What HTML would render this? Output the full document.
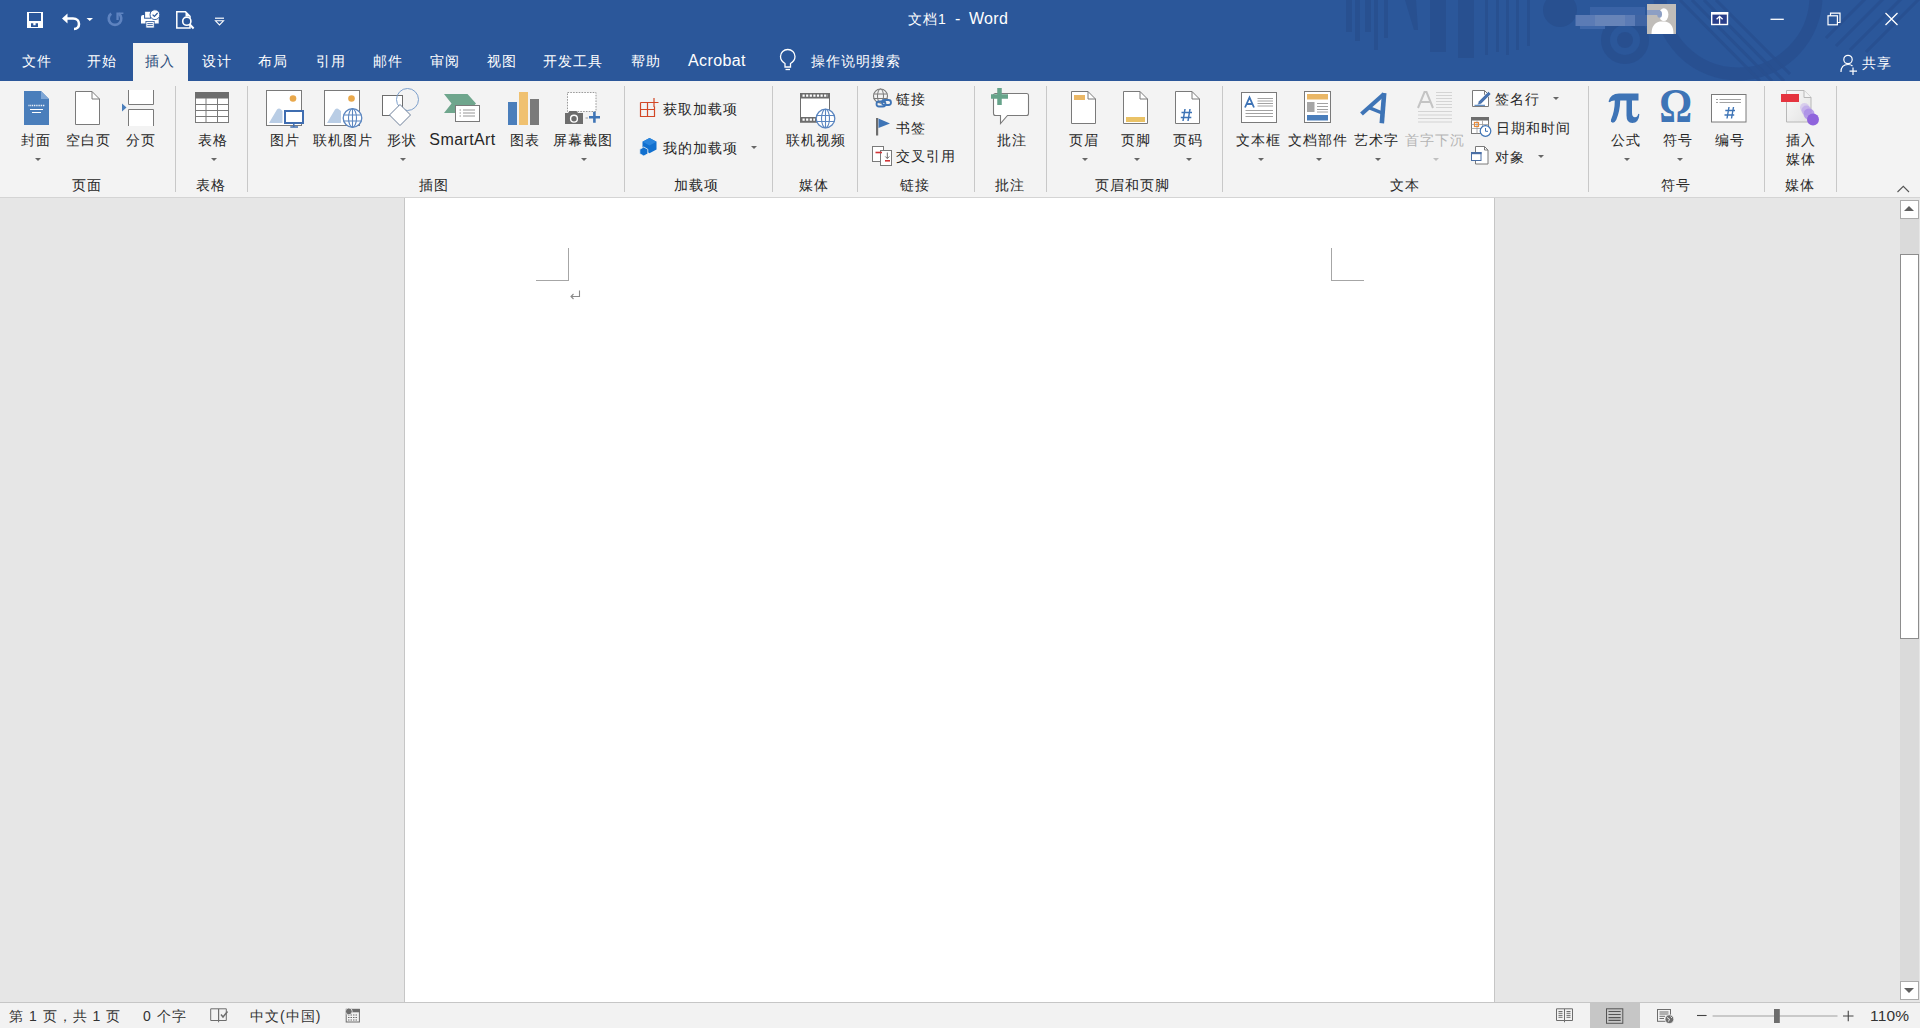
<!DOCTYPE html>
<html><head><meta charset="utf-8"><title>Word</title>
<style>
html,body{margin:0;padding:0;width:1920px;height:1028px;overflow:hidden;background:#e6e6e6;font-family:"Liberation Sans",sans-serif;}
.a{position:absolute;}
.t{position:absolute;white-space:nowrap;font-size:14px;letter-spacing:1px;line-height:20px;color:#262626;font-weight:500;}
.c{width:200px;text-align:center;padding-left:0.5px;}
.w{color:#fff;}
.sep{position:absolute;top:86px;width:1px;height:106px;background:#c8c8c8;}
.dd{position:absolute;width:0;height:0;border-left:3px solid transparent;border-right:3px solid transparent;border-top:3px solid #666;}
svg{position:absolute;overflow:visible;}
</style></head><body>
<!-- TITLE BAR + TABS -->
<div class="a" id="blue" style="left:0;top:0;width:1920px;height:81px;background:#2b579a;"></div>
<!-- decorations -->
<svg id="deco" style="left:0;top:0" width="1920" height="81" viewBox="0 0 1920 81">
<defs><clipPath id="tb"><rect x="0" y="0" width="1920" height="81"/></clipPath></defs>
<g clip-path="url(#tb)" fill="#284f8f" opacity="0.85">
<rect x="1346" y="0" width="6" height="32"/>
<rect x="1355" y="0" width="5" height="41"/>
<rect x="1365" y="0" width="6" height="32"/>
<rect x="1374" y="0" width="4" height="50"/>
<rect x="1384" y="0" width="4" height="38"/>
<path d="M1405 0H1416L1418 30H1414Z"/>
<rect x="1430" y="0" width="16" height="52"/>
<rect x="1458" y="0" width="16" height="58"/>
<rect x="1485" y="0" width="3" height="55"/>
<rect x="1496" y="0" width="3" height="52"/>
<rect x="1506" y="0" width="3" height="55"/>
<rect x="1516" y="0" width="3" height="50"/>
<rect x="1527" y="0" width="3" height="46"/>
<circle cx="1560" cy="10" r="17"/>
<circle cx="1625" cy="40" r="24"/>
</g>
<g clip-path="url(#tb)">
<circle cx="1625" cy="40" r="15" fill="#2b579a"/>
<circle cx="1625" cy="40" r="8" fill="#284f8f"/>
<circle cx="1738" cy="-4" r="78" fill="none" stroke="#284f8f" stroke-width="13" opacity="0.85"/>
<g stroke="#284f8f" stroke-width="3" opacity="0.8">
<path d="M1680 0L1760 81M1692 0L1772 81M1704 0L1784 81M1716 0L1790 74"/>
<path d="M1826 38L1874 -10M1836 46L1892 -10M1850 50L1910 -10M1866 52L1920 -2"/>
</g>
</g>
<!-- blurred name -->
<rect x="1590" y="7" width="55" height="8" fill="#3a63a6"/>
<rect x="1575.5" y="15" width="60" height="11" fill="#5b7bb5"/>
<rect x="1595" y="15" width="30" height="11" fill="#6784b8"/>
<rect x="1635" y="15" width="12" height="11" fill="#3f64a3"/>
<rect x="1580" y="26" width="25" height="3" fill="#3f68aa"/>
<!-- avatar -->
<rect x="1647" y="4" width="29" height="30" fill="#c0bdb9"/>
<rect x="1647" y="10" width="13" height="5" fill="#8d9fc4"/>
<path d="M1651.5 34C1651.5 26 1655 22.5 1660 21.5L1665 21.5C1670.5 22.5 1673.5 26 1673.5 34Z" fill="#fff"/>
<ellipse cx="1663.8" cy="14.6" rx="4.6" ry="6.4" fill="#fff"/><ellipse cx="1659.6" cy="14.2" rx="2.4" ry="3.6" fill="#8d9fc4"/>
<!-- QAT -->
<g fill="#fff">
<path d="M27 12H43V28H27ZM29 13V21H41V13ZM31 23.3V27H38V23.3ZM33.3 23.3V25.3H35.6V23.3Z" fill-rule="evenodd"/>
</g>
<path d="M64 18.5H73C77 18.5 79 21 79 24C79 27 77 29 74 29" fill="none" stroke="#fff" stroke-width="2.6"/>
<path d="M62 18.5L67.5 13.5V23.5Z" fill="#fff"/>
<path d="M86.5 18H93L89.75 21Z" fill="#fff"/>
<path d="M118.8 13.6A6.3 6.3 0 1 1 111.2 13.6" fill="none" stroke="#5e83c0" stroke-width="2.6"/>
<path d="M116.4 12.6H123.4V14H118.7V20H116.4Z" fill="#5e83c0"/>
<path d="M143 15H158.7V23.5H141V17Q141 15 143 15Z" fill="#fff"/>
<rect x="144.6" y="11.2" width="6" height="7" fill="#fff" stroke="#2b579a" stroke-width="1"/>
<circle cx="154.9" cy="14.7" r="4.9" fill="#fff" stroke="#2b579a" stroke-width="0.9"/>
<path d="M152.6 14.7L154.4 16.5L157.6 13" fill="none" stroke="#2b579a" stroke-width="1.2"/>
<rect x="145.9" y="21.5" width="8.3" height="6.5" fill="#fff" stroke="#2b579a" stroke-width="0.8"/>
<path d="M147.3 23.6H152.8M147.3 25.6H152.8" stroke="#2b579a" stroke-width="0.9"/>
<path d="M176.8 11.8H185.5L190 16.3V28H176.8Z" fill="none" stroke="#fff" stroke-width="1.5"/>
<path d="M185.5 11.8V16.3H190" fill="#fff"/>
<circle cx="186.8" cy="21.2" r="4.1" fill="#2b579a" stroke="#fff" stroke-width="1.6"/>
<path d="M189.6 24.2L193.6 28.5" stroke="#fff" stroke-width="2"/>
<path d="M215 18.2H224" stroke="#fff" stroke-width="1.2"/>
<path d="M215.5 20.8H223.5L219.5 25Z" fill="none" stroke="#fff" stroke-width="1.1"/>
<!-- window controls -->
<rect x="1711.7" y="12.7" width="15.8" height="11.8" fill="#2a3f8a" stroke="#fff" stroke-width="1.4"/>
<rect x="1711" y="12" width="17.2" height="2.6" fill="#fff"/>
<path d="M1719.6 24V16.5M1716.6 19.3L1719.6 16.3L1722.6 19.3" fill="none" stroke="#fff" stroke-width="1.3"/>
<path d="M1770.5 19.3H1783.8" stroke="#fff" stroke-width="1.3"/>
<rect x="1828" y="15.8" width="9.4" height="9" fill="none" stroke="#fff" stroke-width="1.2"/>
<path d="M1830.5 15.8V13.2H1840V22.5H1837.4" fill="none" stroke="#fff" stroke-width="1.2"/>
<path d="M1885.5 13L1897.5 25M1897.5 13L1885.5 25" stroke="#fff" stroke-width="1.3"/>
<!-- lightbulb -->
<path d="M785 67V63.5C782.5 62 780.5 59.5 780.5 56.5C780.5 52.5 783.8 49.5 787.8 49.5C791.8 49.5 795 52.5 795 56.5C795 59.5 793 62 790.5 63.5V67Z" fill="none" stroke="#fff" stroke-width="1.3"/>
<path d="M785.5 69.5H790" stroke="#fff" stroke-width="1.3"/>
<!-- share -->
<circle cx="1848" cy="59.5" r="4.2" fill="none" stroke="#fff" stroke-width="1.2"/>
<path d="M1841 72C1841 67 1844 64.5 1848 64.5C1850 64.5 1851.5 65 1852.5 66" fill="none" stroke="#fff" stroke-width="1.2"/>
<path d="M1853 67.5V75M1849.5 71.2H1857" stroke="#fff" stroke-width="1.2"/>
</svg>
<div id="qat"></div>
<div class="t w" style="left:908px;top:9px;">文档1</div>
<div class="t w" style="left:955px;top:9px;font-size:16px;">-</div>
<div class="t w" style="left:969px;top:9px;font-size:16px;letter-spacing:0.3px">Word</div>
<div id="winctl"></div>

<!-- tabs -->
<div class="a" style="left:133px;top:43px;width:55px;height:38px;background:#f3f3f3;"></div>
<div class="t w" style="left:22px;top:51px;">文件</div>
<div class="t w" style="left:87px;top:51px;">开始</div>
<div class="t" style="left:145px;top:51px;color:#2b4b7a">插入</div>
<div class="t w" style="left:202px;top:51px;">设计</div>
<div class="t w" style="left:258px;top:51px;">布局</div>
<div class="t w" style="left:316px;top:51px;">引用</div>
<div class="t w" style="left:373px;top:51px;">邮件</div>
<div class="t w" style="left:430px;top:51px;">审阅</div>
<div class="t w" style="left:487px;top:51px;">视图</div>
<div class="t w" style="left:543px;top:51px;">开发工具</div>
<div class="t w" style="left:631px;top:51px;">帮助</div>
<div class="t w" style="left:688px;top:51px;font-size:16px;letter-spacing:0.4px">Acrobat</div>
<div class="t w" style="left:811px;top:51px;">操作说明搜索</div>
<div class="t w" style="left:1862px;top:53px;">共享</div>

<!-- RIBBON -->
<div class="a" id="ribbon" style="left:0;top:81px;width:1920px;height:116px;background:#f3f3f3;"></div>
<div class="a" style="left:0;top:197px;width:1920px;height:1px;background:#d4d4d4;"></div>
<div id="seps">
<div class="sep" style="left:175px"></div>
<div class="sep" style="left:247px"></div>
<div class="sep" style="left:624px"></div>
<div class="sep" style="left:772px"></div>
<div class="sep" style="left:857px"></div>
<div class="sep" style="left:974px"></div>
<div class="sep" style="left:1046px"></div>
<div class="sep" style="left:1222px"></div>
<div class="sep" style="left:1588px"></div>
<div class="sep" style="left:1764px"></div>
<div class="sep" style="left:1836px"></div>
</div>
<div id="labels">
<!-- big button labels -->
<div class="t c" style="left:-65px;top:130px">封面</div>
<div class="t c" style="left:-12px;top:130px">空白页</div>
<div class="t c" style="left:40px;top:130px">分页</div>
<div class="t c" style="left:112px;top:130px">表格</div>
<div class="t c" style="left:184px;top:130px">图片</div>
<div class="t c" style="left:242px;top:130px">联机图片</div>
<div class="t c" style="left:301px;top:130px">形状</div>
<div class="t c" style="left:362px;top:130px;font-size:16px;letter-spacing:0.4px">SmartArt</div>
<div class="t c" style="left:424px;top:130px">图表</div>
<div class="t c" style="left:482px;top:130px">屏幕截图</div>
<div class="t" style="left:663px;top:99px">获取加载项</div>
<div class="t" style="left:663px;top:138px">我的加载项</div>
<div class="t c" style="left:715px;top:130px">联机视频</div>
<div class="t" style="left:896px;top:89px">链接</div>
<div class="t" style="left:896px;top:118px">书签</div>
<div class="t" style="left:896px;top:146px">交叉引用</div>
<div class="t c" style="left:911px;top:130px">批注</div>
<div class="t c" style="left:983px;top:130px">页眉</div>
<div class="t c" style="left:1035px;top:130px">页脚</div>
<div class="t c" style="left:1087px;top:130px">页码</div>
<div class="t c" style="left:1158px;top:130px">文本框</div>
<div class="t c" style="left:1217px;top:130px">文档部件</div>
<div class="t c" style="left:1276px;top:130px">艺术字</div>
<div class="t c" style="left:1334px;top:130px;color:#b4b4b4">首字下沉</div>
<div class="t" style="left:1495px;top:89px">签名行</div>
<div class="t" style="left:1496px;top:118px">日期和时间</div>
<div class="t" style="left:1495px;top:147px">对象</div>
<div class="t c" style="left:1525px;top:130px">公式</div>
<div class="t c" style="left:1577px;top:130px">符号</div>
<div class="t c" style="left:1629px;top:130px">编号</div>
<div class="t c" style="left:1700px;top:130px">插入</div>
<div class="t c" style="left:1700px;top:149px">媒体</div>
<!-- group labels -->
<div class="t c" style="left:-14px;top:175px">页面</div>
<div class="t c" style="left:110px;top:175px">表格</div>
<div class="t c" style="left:333px;top:175px">插图</div>
<div class="t c" style="left:596px;top:175px">加载项</div>
<div class="t c" style="left:713px;top:175px">媒体</div>
<div class="t c" style="left:814px;top:175px">链接</div>
<div class="t c" style="left:909px;top:175px">批注</div>
<div class="t c" style="left:1032px;top:175px">页眉和页脚</div>
<div class="t c" style="left:1304px;top:175px">文本</div>
<div class="t c" style="left:1575px;top:175px">符号</div>
<div class="t c" style="left:1699px;top:175px">媒体</div>
</div>
<div id="dds">
<div class="dd" style="left:35px;top:158px"></div>
<div class="dd" style="left:211px;top:158px"></div>
<div class="dd" style="left:400px;top:158px"></div>
<div class="dd" style="left:581px;top:158px"></div>
<div class="dd" style="left:751px;top:146px"></div>
<div class="dd" style="left:1082px;top:158px"></div>
<div class="dd" style="left:1134px;top:158px"></div>
<div class="dd" style="left:1186px;top:158px"></div>
<div class="dd" style="left:1258px;top:158px"></div>
<div class="dd" style="left:1316px;top:158px"></div>
<div class="dd" style="left:1375px;top:158px"></div>
<div class="dd" style="left:1433px;top:158px;border-top-color:#c0c0c0"></div>
<div class="dd" style="left:1553px;top:97px"></div>
<div class="dd" style="left:1538px;top:155px"></div>
<div class="dd" style="left:1624px;top:158px"></div>
<div class="dd" style="left:1677px;top:158px"></div>
</div>
<svg id="ricons" style="left:0;top:0" width="1920" height="200" viewBox="0 0 1920 200">
<!-- cover page -->
<path d="M24 91H41L49 99V125H24Z" fill="#4a7ebb"/>
<path d="M41 91V99H49Z" fill="#7ea6d6"/>
<path d="M28.5 105.5H45" stroke="#fff" stroke-width="1.6" stroke-dasharray="1 0.8"/>
<path d="M30 109.5H43M32 112.5H41" stroke="#fff" stroke-width="1"/>
<!-- blank page -->
<path d="M75.5 91.5H92L99.5 99V124.5H75.5Z" fill="#fff" stroke="#7a7a7a" stroke-width="1"/>
<path d="M92 91.5V99H99.5" fill="none" stroke="#7a7a7a" stroke-width="1"/>
<!-- page break -->
<path d="M128.5 90V104.5H153.5V90M128.5 126V109.5H153.5V126" fill="#fff" stroke="#7a7a7a" stroke-width="1"/>
<path d="M122 103.5L126.5 107.5L122 111.5Z" fill="#4a7ebb"/>
<!-- table -->
<rect x="195.5" y="92.5" width="33" height="30" fill="#fff" stroke="#7a7a7a"/>
<rect x="195" y="92" width="34" height="6.5" fill="#6d6d6d"/>
<path d="M206 98V122M217.5 98V122M195.5 104.5H228.5M195.5 110.5H228.5M195.5 116.5H228.5" stroke="#7a7a7a" stroke-width="1"/>
<!-- picture -->
<rect x="266.5" y="90.5" width="35" height="35" fill="#fff" stroke="#7a7a7a"/>
<circle cx="293" cy="98.5" r="3.3" fill="#e9a84b"/>
<path d="M269 123L277 109.5Q279 107.3 281 109.5L282.5 111V123Z" fill="#b9cde5"/>
<rect x="285" y="111" width="18" height="12" fill="#fff" stroke="#3f6db0" stroke-width="2"/>
<path d="M293.8 124V126.5M290.3 127H298" stroke="#3f6db0" stroke-width="1.5"/>
<!-- online picture -->
<rect x="324.5" y="90.5" width="35" height="35" fill="#fff" stroke="#7a7a7a"/>
<circle cx="351.5" cy="98.5" r="3.3" fill="#e9a84b"/>
<path d="M327 123L335 109.5Q337 107.3 339 109.5L341 111V123Z" fill="#b9cde5"/>
<circle cx="352.5" cy="118" r="9.3" fill="#fff" stroke="#5b86c0" stroke-width="1.3"/>
<ellipse cx="352.5" cy="118" rx="4" ry="9.3" fill="none" stroke="#5b86c0" stroke-width="1.1"/>
<path d="M352.5 108.7V127.3M343.5 115H361.5M343.5 121H361.5" stroke="#5b86c0" stroke-width="1.1"/>
<!-- shapes -->
<rect x="382.5" y="95.5" width="20" height="20" fill="#fff" stroke="#6d6d6d"/>
<circle cx="407.5" cy="99.5" r="11" fill="none" stroke="#7da0cc" stroke-width="1"/>
<path d="M400 104.5L410.5 115L400 125.5L389.5 115Z" fill="#fff" stroke="#6d7f99" stroke-width="1"/>
<!-- smartart -->
<path d="M444 94H467.5L476 103.5L467.5 113H444L451.5 103.5Z" fill="#6fa68d"/>
<rect x="455.5" y="105.5" width="24" height="16" fill="#fff" stroke="#7a7a7a"/>
<path d="M459.5 110H461M459.5 113H461M459.5 116H461M463 110H475M463 113H475M463 116H475" stroke="#8a8a8a" stroke-width="0.9"/>
<!-- chart -->
<rect x="508" y="102" width="9" height="23" fill="#4a7ebb"/>
<rect x="519" y="92" width="9" height="33" fill="#f0c170"/>
<rect x="530" y="99" width="9" height="26" fill="#7a7a7a"/>
<!-- screenshot -->
<rect x="567.5" y="92.5" width="28.5" height="19" fill="#fff" stroke="#9a9a9a" stroke-dasharray="1.6 1.2"/>
<path d="M565 113H568L569.5 111H576.5L578 113H583V124H565Z" fill="#6d6d6d"/>
<circle cx="574" cy="118.7" r="3.4" fill="none" stroke="#fff" stroke-width="1.4"/>
<path d="M594.4 111.8V122.8M589 117.3H600" stroke="#3e74b6" stroke-width="2.6"/>
<path d="M585.5 118H588" stroke="#9a9a9a" stroke-width="1"/>
<!-- get add-ins -->
<path d="M640.5 102.5H650.5M640.5 102.5V116.5H654.5V106.5M640.5 109.5H654.5M647.5 102.5V116.5" fill="none" stroke="#d24726" stroke-width="1.2"/>
<path d="M654 98V107M649.5 102.5H658.5" stroke="#d24726" stroke-width="1.2"/>
<!-- my add-ins -->
<path d="M649.5 138L656.5 141.8V149.5L649.5 153.3L642.5 149.5V141.8Z" fill="#1170cf"/>
<path d="M649.5 138L656.5 141.8L649.5 145.6L642.5 141.8Z" fill="#2a85dd"/>
<path d="M643.8 147L647.8 149.3V153.8L643.8 156L639.8 153.8V149.3Z" fill="#1170cf" stroke="#f3f3f3" stroke-width="0.8"/>
<!-- online video -->
<rect x="800.5" y="93.5" width="29" height="28.5" fill="#fff" stroke="#6d6d6d"/>
<rect x="800" y="93" width="30" height="5.5" fill="#6d6d6d"/>
<rect x="800" y="117" width="30" height="5.5" fill="#6d6d6d"/>
<path d="M802.5 95.7H828M802.5 119.7H815" stroke="#fff" stroke-width="2.2" stroke-dasharray="2.2 1.4"/>
<circle cx="825.5" cy="118.5" r="9.3" fill="#fff" stroke="#5b86c0" stroke-width="1.3"/>
<ellipse cx="825.5" cy="118.5" rx="4" ry="9.3" fill="none" stroke="#5b86c0" stroke-width="1.1"/>
<path d="M825.5 109.2V127.8M816.5 115.5H834.5M816.5 121.5H834.5" stroke="#5b86c0" stroke-width="1.1"/>
<!-- link -->
<circle cx="880.5" cy="96" r="7" fill="#f3f3f3" stroke="#7a7a7a" stroke-width="1.1"/>
<ellipse cx="880.5" cy="96" rx="3" ry="7" fill="none" stroke="#7a7a7a" stroke-width="1"/>
<path d="M873.5 94H887.5M873.5 98.5H887.5" stroke="#7a7a7a" stroke-width="1"/>
<rect x="876.5" y="101.5" width="9" height="5" rx="2.5" fill="none" stroke="#3e74b6" stroke-width="1.8"/>
<rect x="882" y="100" width="9" height="5" rx="2.5" fill="none" stroke="#3e74b6" stroke-width="1.8"/>
<!-- bookmark -->
<rect x="876" y="118" width="2.2" height="17.5" fill="#6d6d6d"/>
<path d="M878.5 118.5L890 123.5L878.5 128Z" fill="#3e74b6"/>
<!-- cross reference -->
<rect x="872.5" y="146.5" width="11" height="15" fill="#fff" stroke="#7a7a7a"/>
<rect x="880.5" y="150.5" width="11" height="15" fill="#fff" stroke="#7a7a7a"/>
<path d="M875.5 152.5H882" stroke="#d13438" stroke-width="1.6"/>
<path d="M885 160.8H890" stroke="#d13438" stroke-width="1.6"/>
<path d="M887.3 152.5V158.5M885.3 156.5L887.3 158.5L889.3 156.5" fill="none" stroke="#6d6d6d" stroke-width="1"/>
<!-- comment -->
<path d="M995.5 93.5H1026.5Q1028.5 93.5 1028.5 95.5V113.5Q1028.5 115.5 1026.5 115.5H1007.5L1000.5 123.5V115.5H995.5Q993.5 115.5 993.5 113.5V95.5Q993.5 93.5 995.5 93.5Z" fill="#fff" stroke="#7a7a7a" stroke-width="1.1"/>
<path d="M999.5 88V105M991 96.5H1008" stroke="#66a38a" stroke-width="4.5"/>
<!-- header / footer / page number -->
<path d="M1071.5 91.5H1088L1095.5 99V123.5H1071.5Z" fill="#fff" stroke="#7a7a7a"/>
<path d="M1088 91.5V99H1095.5" fill="none" stroke="#7a7a7a"/>
<rect x="1074" y="95" width="11" height="5" fill="#eab766"/>
<path d="M1123.5 91.5H1140L1147.5 99V123.5H1123.5Z" fill="#fff" stroke="#7a7a7a"/>
<path d="M1140 91.5V99H1147.5" fill="none" stroke="#7a7a7a"/>
<rect x="1126" y="117" width="19" height="5" fill="#eac266"/>
<path d="M1175.5 91.5H1192L1199.5 99V123.5H1175.5Z" fill="#fff" stroke="#7a7a7a"/>
<path d="M1192 91.5V99H1199.5" fill="none" stroke="#7a7a7a"/>
<path d="M1185 109L1183 121M1190 109L1188 121M1181.5 112.5H1192M1180.8 117.5H1191.3" stroke="#3e74b6" stroke-width="1.5"/>
<!-- textbox -->
<rect x="1241.5" y="92.5" width="35" height="30" fill="#fff" stroke="#7a7a7a"/>
<path d="M1245 107.5L1249.5 97.5L1254 107.5M1246.5 104H1252.5" fill="none" stroke="#3e74b6" stroke-width="1.8"/>
<path d="M1257.5 98.5H1273M1257.5 101H1273M1257.5 103.5H1273M1257.5 106H1273M1245.5 110.5H1273M1245.5 113.5H1273M1245.5 116.5H1273" stroke="#8a8a8a" stroke-width="0.8"/>
<!-- quick parts -->
<rect x="1304.5" y="91.5" width="26" height="31" fill="#fff" stroke="#7a7a7a"/>
<rect x="1307" y="94" width="21" height="5.5" fill="#eab766"/>
<rect x="1307" y="102" width="7.5" height="10" fill="#a6a6a6"/>
<path d="M1317 103.5H1328M1317 106.5H1328M1317 109.5H1328M1317 112H1328" stroke="#8a8a8a" stroke-width="0.8"/>
<rect x="1307" y="115" width="21" height="5.5" fill="#4a7ebb"/>
<!-- wordart -->
<path d="M1361.5 114L1384 94" stroke="#3e74b6" stroke-width="4.2"/>
<path d="M1384.2 93L1381.8 123.2" stroke="#3e74b6" stroke-width="4.6"/>
<path d="M1369 107.6L1381.5 112.8" stroke="#3e74b6" stroke-width="3.4"/>
<!-- drop cap disabled -->
<path d="M1418 108L1424.5 92H1426.5L1433 108M1420.5 102H1430.5" fill="none" stroke="#c4c4c4" stroke-width="2"/>
<path d="M1436 92.5H1452M1436 95.5H1452M1436 98.5H1452M1436 101.5H1452M1436 104.5H1452M1436 107.5H1452M1418 111.5H1452M1418 115H1452M1418 118.5H1452M1418 122H1452" stroke="#d0d0d0" stroke-width="0.9"/>
<!-- signature line -->
<path d="M1472.5 90.5H1484.5L1488.5 94.5V106.5H1472.5Z" fill="#fff" stroke="#7a7a7a"/>
<path d="M1484.5 90.5V94.5H1488.5" fill="none" stroke="#7a7a7a"/>
<path d="M1478.5 101.5L1488.5 91.5L1491 94L1481 104L1477.5 105Z" fill="#4a74b0" stroke="#f3f3f3" stroke-width="0.6"/>
<path d="M1474.5 105.3H1485" stroke="#3e74b6" stroke-width="1"/>
<!-- date time -->
<rect x="1471.5" y="117.5" width="17" height="16" fill="#fff" stroke="#7a7a7a"/>
<rect x="1471" y="117" width="18" height="3.5" fill="#6d6d6d"/>
<path d="M1471.5 124.5H1488.5M1471.5 128.5H1482M1477 120.5V133.5M1482.5 120.5V128" stroke="#9a9a9a" stroke-width="0.8"/>
<rect x="1474.5" y="122.5" width="4" height="4" fill="none" stroke="#e98b3a" stroke-width="1.2"/>
<circle cx="1485.5" cy="131" r="5.3" fill="#fff" stroke="#3e74b6" stroke-width="1.2"/>
<path d="M1485.5 128V131.3H1488" fill="none" stroke="#3e74b6" stroke-width="1"/>
<!-- object -->
<path d="M1475.5 146.5H1484.5L1488 150V164H1475.5Z" fill="#fff" stroke="#7a7a7a"/>
<path d="M1484.5 146.5V150H1488" fill="none" stroke="#7a7a7a"/>
<rect x="1471.5" y="152.5" width="9.5" height="8" fill="#fff" stroke="#4a6fa5" stroke-width="1"/>
<rect x="1471" y="152" width="10.5" height="2.2" fill="#4a6fa5"/>
<!-- pi -->
<path d="M1608.5 101.5Q1610.5 93.5 1619 93.5H1638.5V100.5H1632V112.5Q1632 117.3 1635 117.3Q1637.5 117.3 1638.3 113.8L1639.4 114.3Q1638.8 123 1632.3 123Q1626.5 123 1626.5 115.5V100.5H1620.2Q1620 111 1616.3 119.8Q1614.8 123 1612.3 122.6Q1610.3 122.2 1611 119.8Q1614.8 111 1614.8 100.5Q1611.5 100.3 1609.6 102.3Z" fill="#3e74b6"/>
<!-- omega -->
<text transform="translate(1675.6 122) scale(1 1.2)" x="0" y="0" text-anchor="middle" font-family="Liberation Serif" font-weight="bold" font-size="41" fill="#3e74b6">Ω</text>
<!-- numbering -->
<rect x="1711.5" y="94.5" width="34.5" height="27.5" fill="#fff" stroke="#7a7a7a"/>
<path d="M1716 99.5H1718M1719.5 99.5H1741M1716 102.5H1718M1719.5 102.5H1741" stroke="#8a8a8a" stroke-width="0.8"/>
<path d="M1729 107L1727 118.5M1733.5 107L1731.5 118.5M1725.3 110.5H1735M1724.5 115H1734.2" stroke="#3e74b6" stroke-width="1.4"/>
<!-- insert media -->
<defs><linearGradient id="pg" x1="0" y1="0" x2="1" y2="1"><stop offset="0" stop-color="#fafafa"/><stop offset="1" stop-color="#e2e2e2"/></linearGradient></defs>
<path d="M1786.5 90.5H1804L1811 97.5V122H1786.5Z" fill="url(#pg)" stroke="#b8b8b8"/>
<path d="M1804 90.5V97.5H1811" fill="#f4f4f4" stroke="#b8b8b8"/>
<rect x="1781" y="94" width="18" height="8" fill="#e5343f"/>
<circle cx="1804.5" cy="107.5" r="4.5" fill="#c9b8ec" opacity="0.6"/>
<circle cx="1806.5" cy="110.5" r="5" fill="#bba4ea" opacity="0.7"/>
<circle cx="1809" cy="114" r="5.5" fill="#a98be6" opacity="0.8"/>
<circle cx="1813" cy="119.5" r="6" fill="#8f64dc"/>
<!-- collapse -->
<path d="M1897.5 192L1903.3 186.3L1909 192" fill="none" stroke="#555" stroke-width="1.1"/>
</svg>

<!-- DOCUMENT -->
<div class="a" style="left:404px;top:198px;width:1089px;height:804px;background:#fff;border-left:1px solid #c6c6c6;border-right:1px solid #c6c6c6;"></div>
<div class="a" style="left:568px;top:248px;width:1px;height:33px;background:#a6a6a6"></div>
<div class="a" style="left:536px;top:280px;width:33px;height:1px;background:#a6a6a6"></div>
<div class="a" style="left:1331px;top:248px;width:1px;height:33px;background:#a6a6a6"></div>
<div class="a" style="left:1331px;top:280px;width:33px;height:1px;background:#a6a6a6"></div>
<svg style="left:569px;top:289px" width="12" height="12" viewBox="0 0 12 12"><path d="M10.5 1.5V7.5H2M4.5 5L2 7.5L4.5 10" fill="none" stroke="#8a8a8a" stroke-width="1.1"/></svg>

<!-- SCROLLBAR -->
<div class="a" style="left:1900px;top:219px;width:19px;height:762px;background:#dadada"></div>
<div class="a" style="left:1900px;top:200px;width:17px;height:17px;background:#fff;border:1px solid #ababab"></div>
<div class="a" style="left:1904px;top:206px;width:0;height:0;border-left:5px solid transparent;border-right:5px solid transparent;border-bottom:5px solid #606060"></div>
<div class="a" style="left:1900px;top:254px;width:17px;height:383px;background:#fff;border:1px solid #8d8d8d"></div>
<div class="a" style="left:1900px;top:981px;width:17px;height:17px;background:#fff;border:1px solid #ababab"></div>
<div class="a" style="left:1904px;top:988px;width:0;height:0;border-left:5px solid transparent;border-right:5px solid transparent;border-top:5px solid #606060"></div>

<!-- STATUS BAR -->
<div class="a" style="left:0;top:1002px;width:1920px;height:1px;background:#c6c6c6"></div>
<div class="a" style="left:0;top:1003px;width:1920px;height:25px;background:#f2f2f2"></div>
<div class="t" style="left:9px;top:1006px;color:#333">第 1 页，共 1 页</div>
<div class="t" style="left:143px;top:1006px;color:#333">0 个字</div>
<div class="t" style="left:250px;top:1006px;color:#333">中文(中国)</div>
<div class="a" style="left:1590px;top:1003px;width:50px;height:25px;background:#c6c6c6"></div>
<div class="t" style="left:1870px;top:1005.5px;color:#333;font-size:15.5px;letter-spacing:0.2px">110%</div>
<svg id="sicons" style="left:0;top:1003px" width="1920" height="25" viewBox="0 1003 1920 25">
<!-- proofing -->
<path d="M210.7 1008.8H218.6V1020.5H210.7Z M218.6 1008.8H226.3V1020.5H218.6Z" fill="none" stroke="#6d6d6d" stroke-width="1"/>
<path d="M218.6 1020.5V1022.3" stroke="#6d6d6d" stroke-width="1"/>
<path d="M221 1014.5L223 1017L227.5 1011.5" fill="none" stroke="#6d6d6d" stroke-width="1.5"/>
<!-- macro -->
<rect x="346.2" y="1009.3" width="13.2" height="12.7" fill="none" stroke="#6d6d6d" stroke-width="1"/>
<rect x="346" y="1009" width="14" height="3.3" fill="#6d6d6d"/>
<path d="M348 1015H358M348 1017.5H358M348 1020H358" stroke="#6d6d6d" stroke-width="1" stroke-dasharray="1.5 1"/>
<circle cx="348.8" cy="1011.4" r="3.4" fill="#6d6d6d" stroke="#f2f2f2" stroke-width="0.8"/>
<!-- read mode -->
<path d="M1556.5 1008.8H1564.5V1020.5H1556.5Z M1564.5 1008.8H1572.5V1020.5H1564.5Z" fill="none" stroke="#6d6d6d" stroke-width="1"/>
<path d="M1564.5 1020.5V1022.3" stroke="#6d6d6d" stroke-width="1"/>
<path d="M1558.5 1011.5H1562.5M1558.5 1013.3H1562.5M1558.5 1015.4H1562.5M1558.5 1017.3H1562.5M1566.5 1011.5H1570.5M1566.5 1013.3H1570.5M1566.5 1015.4H1570.5M1566.5 1017.3H1570.5" stroke="#6d6d6d" stroke-width="1"/>
<!-- print layout -->
<rect x="1606.5" y="1008.8" width="16.3" height="14.5" fill="none" stroke="#555" stroke-width="1"/>
<path d="M1608.5 1011.5H1620.7M1608.5 1014.5H1620.7M1608.5 1017.6H1620.7M1608.5 1020.4H1620.7" stroke="#555" stroke-width="1.1"/>
<!-- web layout -->
<rect x="1657.5" y="1009.5" width="13" height="11.8" fill="none" stroke="#6d6d6d" stroke-width="1"/>
<path d="M1659.5 1012H1668.5M1659.5 1014H1668.5M1659.5 1016.3H1665M1659.5 1018.5H1664" stroke="#6d6d6d" stroke-width="1"/>
<circle cx="1669.4" cy="1019.2" r="4.4" fill="#6d6d6d" stroke="#f2f2f2" stroke-width="0.8"/>
<path d="M1667 1017.5L1669.5 1019L1668.5 1021.5M1670.5 1016.5L1672 1018" stroke="#f2f2f2" stroke-width="0.9" fill="none"/>
<!-- zoom -->
<path d="M1697 1015.5H1706.6" stroke="#444" stroke-width="1.1"/>
<path d="M1712.6 1016H1837.5" stroke="#a0a0a0" stroke-width="1"/>
<rect x="1774" y="1009" width="5.8" height="14" fill="#6d6d6d"/>
<path d="M1843 1016H1853.5M1848.25 1010.8V1021.2" stroke="#444" stroke-width="1.1"/>
</svg>
</body></html>
